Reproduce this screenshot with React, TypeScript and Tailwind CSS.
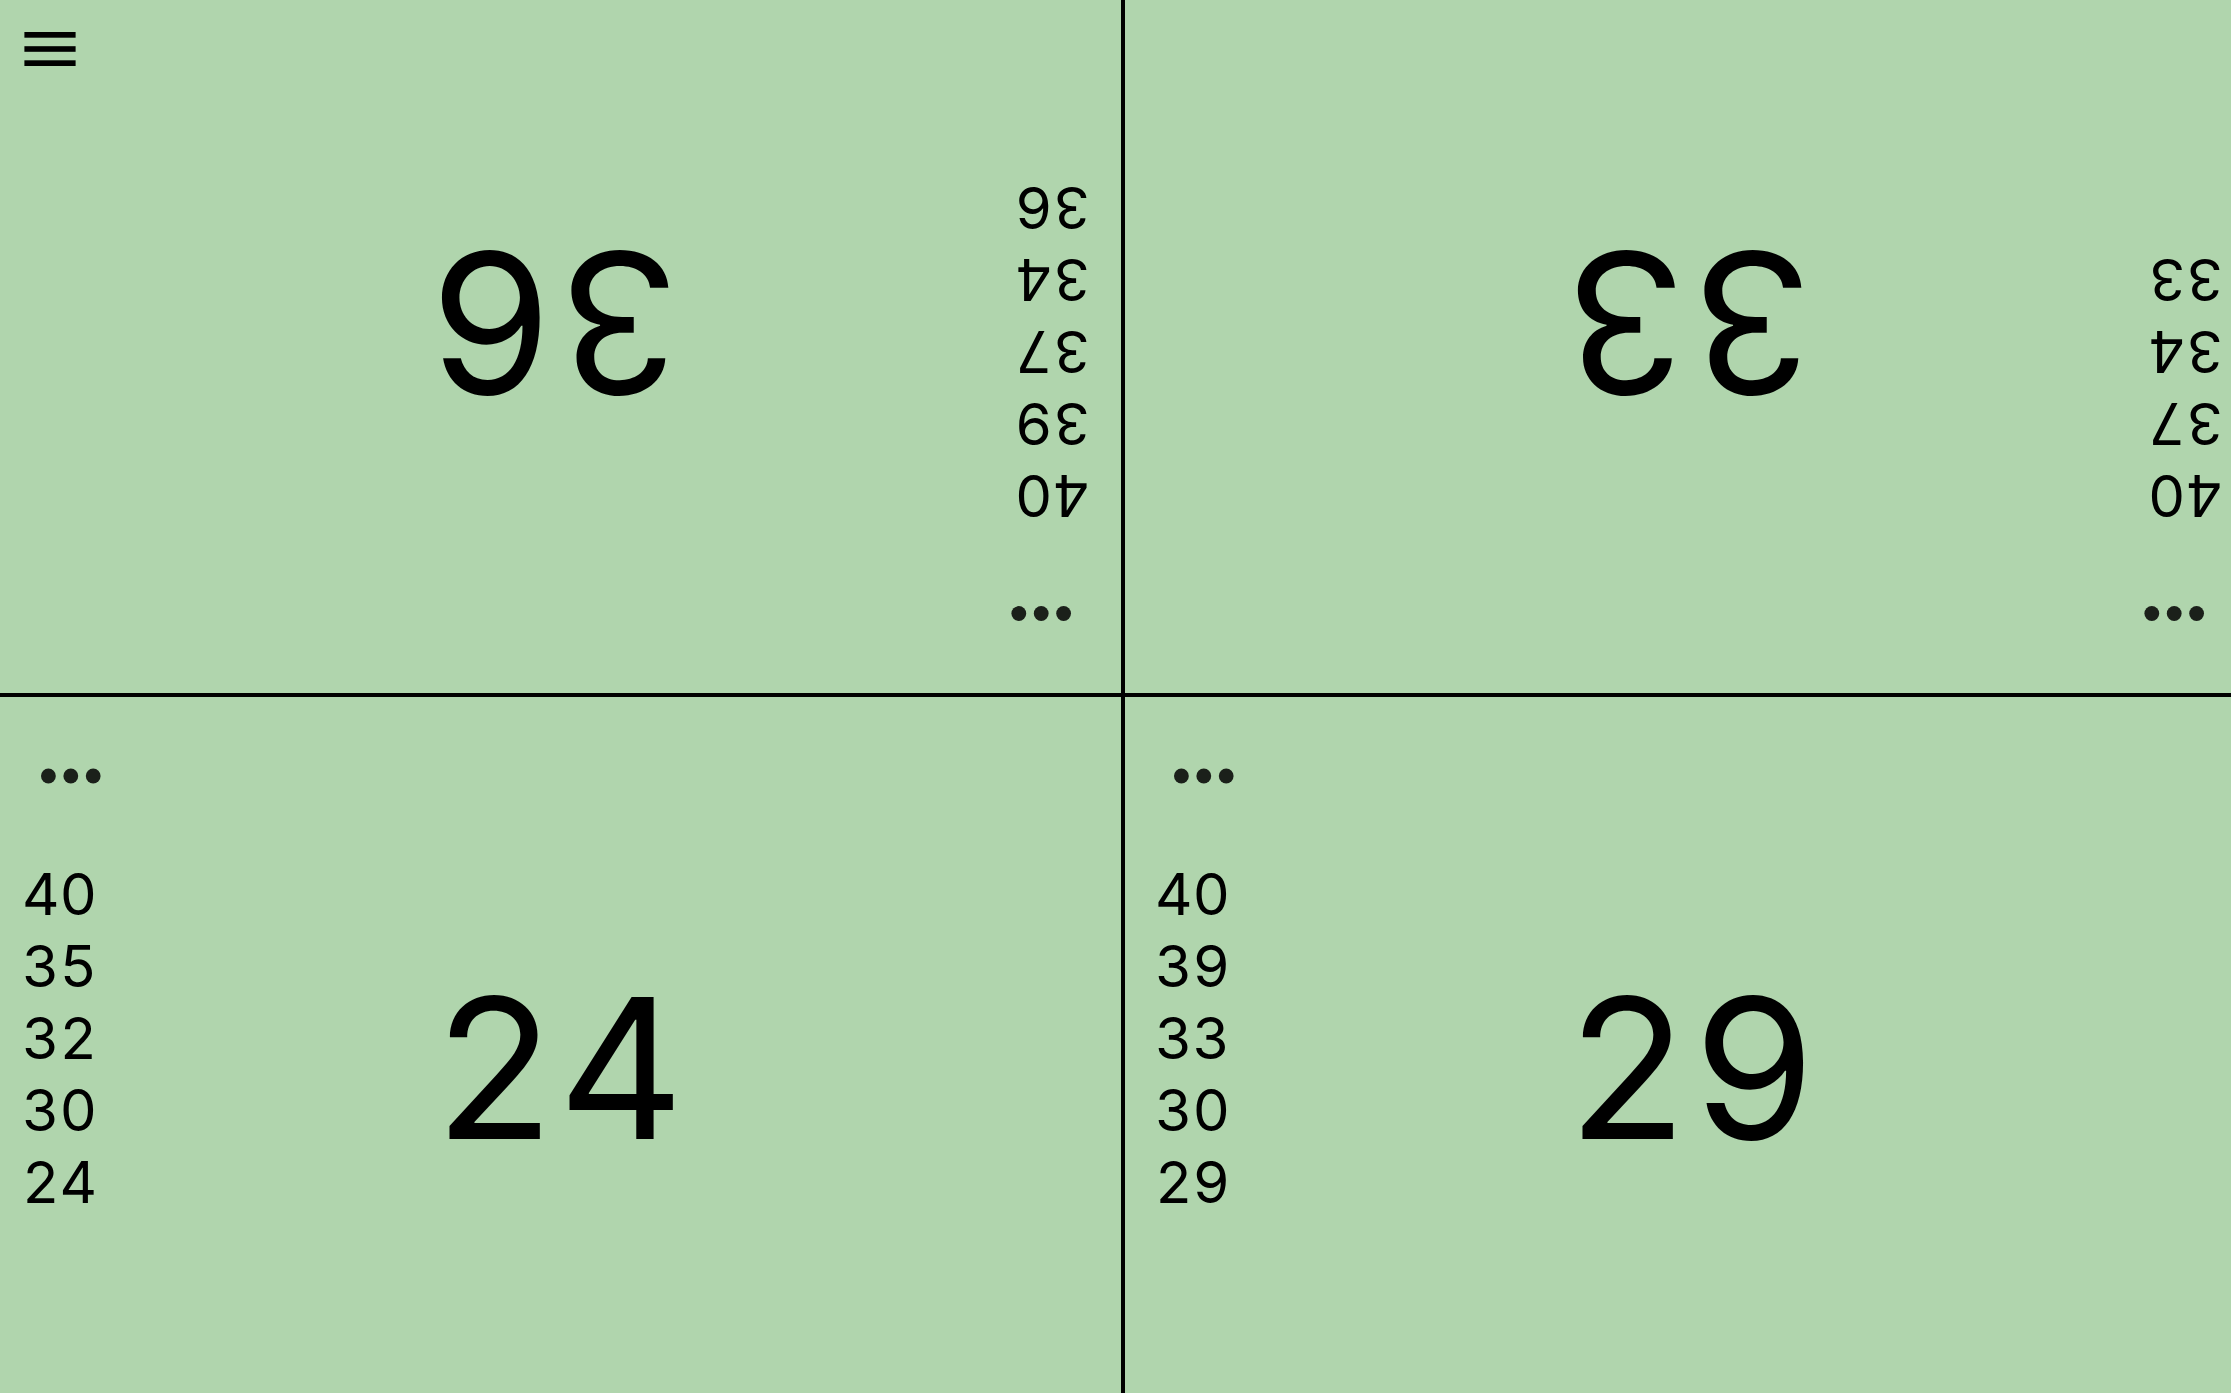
type PlayerProps = {
  name: string;
  history: number[];
  flipped?: boolean;
};

function Player({ name, history, flipped = false }: PlayerProps) {
  return (
    <section
      aria-label={name}
      className={`grid min-w-0 flex-1 grid-cols-[1fr_auto_1fr] tabular-nums ${flipped ? "rotate-180" : ""}`}
    >
      <div className="flex flex-col items-start pt-[55px] pl-[22px]">
        <button type="button" aria-label={`${name} options`} className="mb-[58px] ml-[18px] flex h-12 items-center">
          <svg viewBox="0 0 62 16" className="h-4 w-[62px] fill-[#1b201a]" aria-hidden="true">
            <circle cx="8.4" cy="8" r="7.4" />
            <circle cx="30.8" cy="8" r="7.4" />
            <circle cx="53.2" cy="8" r="7.4" />
          </svg>
        </button>
        <ol className="text-[58px] leading-[72px]">
          {history.map((life, index) => (
            <li key={index}>{life}</li>
          ))}
        </ol>
      </div>
      <p className="self-center pt-12 pl-1 text-[195px] leading-none">{history[history.length - 1]}</p>
    </section>
  );
}

function Divider() {
  return <div className="mr-2 ml-[9px] w-1 shrink-0 bg-black" />;
}

export default function App() {
  return (
    <main className="relative grid h-screen grid-rows-2 overflow-hidden bg-[#b0d5ad] font-['Inter',sans-serif] text-black">
      <div className="flex w-[calc(100%+14px)] border-b-4 border-black">
        <Player name="Player 1" history={[40, 39, 37, 34, 36]} flipped />
        <Divider />
        <Player name="Player 2" history={[40, 37, 34, 33]} flipped />
      </div>
      <div className="flex w-[calc(100%+14px)]">
        <Player name="Player 3" history={[40, 35, 32, 30, 24]} />
        <Divider />
        <Player name="Player 4" history={[40, 39, 33, 30, 29]} />
      </div>
      <button type="button" aria-label="Menu" className="absolute top-8 left-6">
        <svg viewBox="0 0 52 34" className="h-[34px] w-[52px] fill-black" aria-hidden="true">
          <rect x="0.4" y="0" width="51.2" height="5.7" />
          <rect x="0.4" y="14.2" width="51.2" height="5.6" />
          <rect x="0.4" y="28.3" width="51.2" height="5.7" />
        </svg>
      </button>
    </main>
  );
}
